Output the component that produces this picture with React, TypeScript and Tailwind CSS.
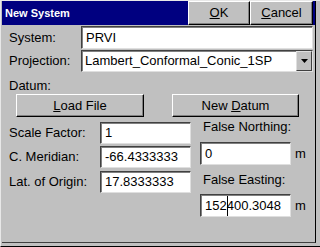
const font = { fontFamily: '"Liberation Sans", Arial, sans-serif' };

const raised =
  "bg-[#c0c0c0] border border-t-white border-l-white border-r-black border-b-black shadow-[inset_-1px_-1px_0_#808080]";
const sunken =
  "bg-white border border-t-[#404040] border-l-[#404040] border-r-[#dfdfdf] border-b-[#dfdfdf] shadow-[inset_1px_1px_0_#808080]";

function Field({ value, className }: { value: React.ReactNode; className: string }) {
  return (
    <div className={`${sunken} ${className} flex items-center pl-[4px] text-[13px] leading-[16px] text-black whitespace-nowrap overflow-hidden`}>
      {value}
    </div>
  );
}

export default function App() {
  return (
    <div
      style={font}
      className="w-[320px] h-[247px] bg-[#c0c0c0] border-t border-l border-t-[#e8e8e8] border-l-[#e8e8e8] border-b border-b-black pl-[1px] text-black overflow-hidden"
    >
      <div className="w-[314px] h-[242px] border-r border-b border-r-black border-b-[#404040] flex flex-col">
        {/* title bar */}
        <div className="h-[24px] bg-[#000080] flex shrink-0">
          <div className="w-[186px] pl-[3px] flex items-center text-[11px] font-bold text-white">
            New System
          </div>
          <div className={`${raised} w-[62px] flex items-center justify-center text-[13px]`}>
            <span><u>O</u>K</span>
          </div>
          <div className={`${raised} w-[63px] flex items-center justify-center text-[13px]`}>
            <span><u>C</u>ancel</span>
          </div>
        </div>

        {/* system */}
        <div className="flex h-[23px] mt-[1px] items-center text-[13px] leading-[16px]">
          <div className="w-[79px] pl-[7px]">System:</div>
          <Field value="PRVI" className="w-[232px] h-[23px]" />
        </div>

        {/* projection */}
        <div className="flex h-[22px] mt-[1px] items-center text-[13px] leading-[16px]">
          <div className="w-[79px] pl-[7px]">Projection:</div>
          <div className={`${sunken} w-[232px] h-[22px] flex items-stretch`}>
            <div className="flex-1 flex items-center pl-[3px] whitespace-nowrap">
              Lambert_Conformal_Conic_1SP
            </div>
            <div className="w-[16px] bg-[#c0c0c0] border border-t-[#dfdfdf] border-l-[#dfdfdf] border-r-[#404040] border-b-[#404040] flex items-center justify-center">
              <svg width="7" height="4" viewBox="0 0 7 4">
                <path d="M0 0H7L3.5 4Z" fill="#000" />
              </svg>
            </div>
          </div>
        </div>

        <div className="mt-[6px] h-[16px] pl-[7px] text-[13px] leading-[16px]">Datum:</div>

        {/* datum buttons */}
        <div className="flex h-[23px] text-[13px]">
          <div className={`${raised} ml-[14px] w-[128px] flex items-center justify-center`}>
            <span><u>L</u>oad File</span>
          </div>
          <div className={`${raised} ml-[28px] w-[127px] flex items-center justify-center`}>
            <span>New <u>D</u>atum</span>
          </div>
        </div>

        {/* parameters */}
        <div className="flex text-[13px] leading-[16px]">
          <div className="w-[198px] flex flex-col">
            <div className="flex items-center mt-[5px]">
              <div className="w-[98px] pl-[7px]">Scale Factor:</div>
              <Field value="1" className="w-[91px] h-[22px]" />
            </div>
            <div className="flex items-center mt-[2px]">
              <div className="w-[98px] pl-[7px]">C. Meridian:</div>
              <Field value="-66.4333333" className="w-[91px] h-[22px]" />
            </div>
            <div className="flex items-center mt-[3px]">
              <div className="w-[98px] pl-[7px]">Lat. of Origin:</div>
              <Field value="17.8333333" className="w-[91px] h-[22px]" />
            </div>
          </div>
          <div className="flex flex-col">
            <div className="mt-[2px] h-[16px] pl-[3px]">False Northing:</div>
            <div className="flex items-center mt-[7px]">
              <Field value="0" className="w-[91px] h-[23px]" />
              <span className="ml-[4px]">m</span>
            </div>
            <div className="mt-[7px] h-[16px] pl-[3px]">False Easting:</div>
            <div className="flex items-center mt-[6px]">
              <Field
                value={
                  <>
                    152
                    <span className="inline-block w-px h-[20px] bg-black -mr-px" />
                    400.3048
                  </>
                }
                className="w-[91px] h-[23px]"
              />
              <span className="ml-[4px]">m</span>
            </div>
          </div>
        </div>
      </div>
    </div>
  );
}
